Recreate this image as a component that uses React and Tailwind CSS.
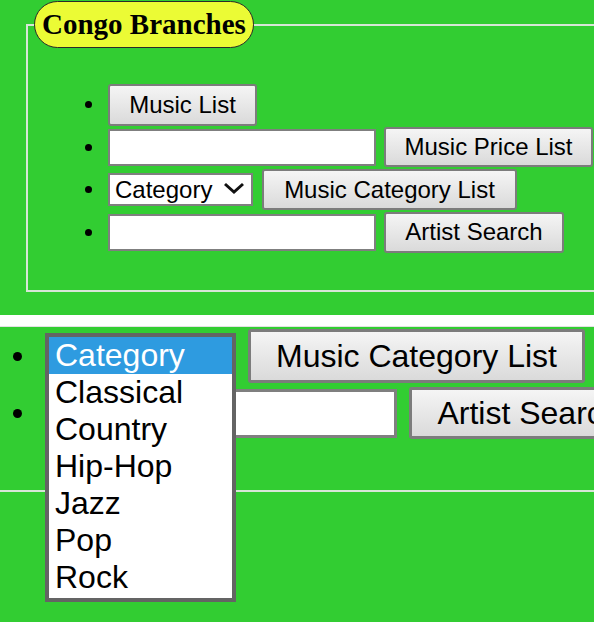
const F = "font-['Liberation_Sans',Arial,sans-serif]";

function Btn({ className = "", children }) {
  return (
    <button
      className={
        "shrink-0 bg-linear-to-b from-[#f5f5f5] to-[#dadada] border-[#7c7c7c] rounded-[3px] text-black whitespace-nowrap flex items-center justify-center " +
        className
      }
    >
      {children}
    </button>
  );
}

function Dot({ className = "" }) {
  return <span className={"shrink-0 rounded-full bg-black " + className} />;
}

const options = ["Category", "Classical", "Country", "Hip-Hop", "Jazz", "Pop", "Rock"];

export default function App() {
  return (
    <div className={"w-[594px] h-[622px] overflow-hidden bg-white " + F}>
      {/* top view */}
      <div className="h-[315px] bg-[#32cd32] overflow-hidden pt-[1px]">
        <fieldset className="ml-[26px] w-[640px] border-2 border-[#d6e6d6] pb-[37px]">
          <legend className="ml-[6px] h-[47px] px-[7px] rounded-full bg-[#ebfb35] border border-[#2a2a2a] font-['Liberation_Serif',serif] font-bold text-[29px] leading-[44px] text-black">
            Congo Branches
          </legend>
          <ul className="mt-[35px] text-[24px]">
            <li className="flex items-center h-[43px]">
              <Dot className="ml-[57px] mr-[16px] w-[7px] h-[7px]" />
              <Btn className="w-[149px] h-[42px] border-2">Music List</Btn>
            </li>
            <li className="flex items-center h-[42px]">
              <Dot className="ml-[57px] mr-[16px] w-[7px] h-[7px]" />
              <div className="shrink-0 w-[268px] h-[37px] border-2 border-[#7f7f7f] bg-white" />
              <Btn className="ml-[8px] w-[209px] h-[40px] border-2">Music Price List</Btn>
            </li>
            <li className="flex items-center h-[43px]">
              <Dot className="ml-[57px] mr-[16px] w-[7px] h-[7px]" />
              <div className="shrink-0 w-[145px] h-[33px] border-2 border-[#7f7f7f] bg-white flex items-center pl-[5px] pr-[6px] justify-between text-black">
                <span className="leading-none">Category</span>
                <svg width="22" height="12" viewBox="0 0 22 12" className="mb-[4px]">
                  <path d="M2 2 L11 10 L20 2" fill="none" stroke="#111" strokeWidth="3" />
                </svg>
              </div>
              <Btn className="ml-[9px] w-[255px] h-[41px] border-2">Music Category List</Btn>
            </li>
            <li className="flex items-center h-[42px]">
              <Dot className="ml-[57px] mr-[16px] w-[7px] h-[7px]" />
              <div className="shrink-0 w-[268px] h-[37px] border-2 border-[#7f7f7f] bg-white" />
              <Btn className="ml-[8px] w-[180px] h-[41px] border-2">Artist Search</Btn>
            </li>
          </ul>
        </fieldset>
      </div>

      {/* gap */}
      <div className="h-[12px] bg-white border-b border-[#e2e2e2]" />

      {/* zoomed view */}
      <div className="h-[295px] bg-[#32cd32] overflow-hidden">
        <div className="border-b-2 border-[#d6e6d6] pt-[2px] pb-[51px]">
          <ul className="text-[32px]">
            <li className="flex items-center h-[54px]">
              <Dot className="ml-[13px] w-[9px] h-[9px]" />
              <div className="relative ml-[23px] w-[191px] self-stretch shrink-0">
                <div className="absolute top-[4px] left-0 w-[191px] h-[269px] z-10 border-4 border-[#646464] bg-white">
                  {options.map((o, i) => (
                    <div
                      key={o}
                      className={
                        "h-[37px] leading-[37px] pl-[6px] " +
                        (i === 0 ? "bg-[#2e9be0] text-white" : "text-black")
                      }
                    >
                      {o}
                    </div>
                  ))}
                </div>
              </div>
              <Btn className="ml-[12px] w-[337px] h-[54px] border-[3px]">Music Category List</Btn>
            </li>
            <li className="flex items-center h-[52px] mt-[4px]">
              <Dot className="ml-[13px] w-[9px] h-[9px]" />
              <div className="shrink-0 ml-[23px] w-[352px] h-[49px] border-[3px] border-[#7f7f7f] bg-white" />
              <Btn className="ml-[12px] w-[240px] h-[52px] border-[3px]">Artist Search</Btn>
            </li>
          </ul>
        </div>
      </div>
    </div>
  );
}
